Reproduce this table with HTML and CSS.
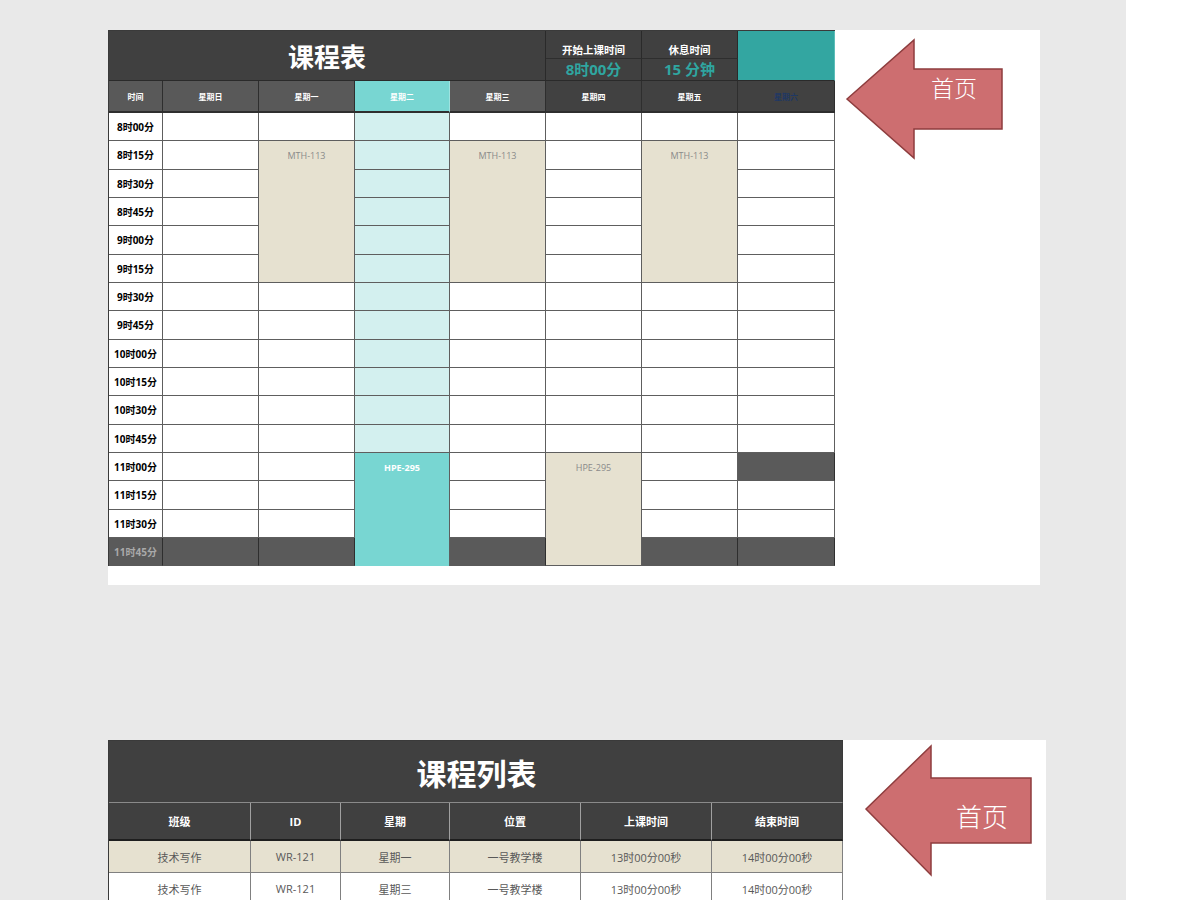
FILE: index.html
```html
<!DOCTYPE html>
<html lang="zh-CN">
<head>
<meta charset="utf-8">
<title>课程表</title>
<link rel="stylesheet" href="styles.css">
</head>
<body>
<div class="canvas">
  <section class="sheet sheet-top">
    <div class="sched">
      <div class="c title">课程表</div>
      <div class="c lbl">开始上课时间</div>
      <div class="c lbl">休息时间</div>
      <div class="c teal-box"></div>
      <div class="c val">8时00分</div>
      <div class="c val">15 分钟</div>

      <div class="c hd">时间</div>
      <div class="c hd">星期日</div>
      <div class="c hd">星期一</div>
      <div class="c hd hd-tue">星期二</div>
      <div class="c hd">星期三</div>
      <div class="c hd hd-dark">星期四</div>
      <div class="c hd hd-dark">星期五</div>
      <div class="c hd hd-dark hd-sat">星期六</div>

      <!-- 8:00 -->
      <div class="c t">8时00分</div><div class="c"></div><div class="c"></div><div class="c lt"></div><div class="c"></div><div class="c"></div><div class="c"></div><div class="c"></div>
      <!-- 8:15 -->
      <div class="c t">8时15分</div><div class="c"></div><div class="c blk beige span5">MTH-113</div><div class="c lt"></div><div class="c blk beige span5">MTH-113</div><div class="c"></div><div class="c blk beige span5">MTH-113</div><div class="c"></div>
      <!-- 8:30 -->
      <div class="c t">8时30分</div><div class="c"></div><div class="c lt"></div><div class="c"></div><div class="c"></div>
      <!-- 8:45 -->
      <div class="c t">8时45分</div><div class="c"></div><div class="c lt"></div><div class="c"></div><div class="c"></div>
      <!-- 9:00 -->
      <div class="c t">9时00分</div><div class="c"></div><div class="c lt"></div><div class="c"></div><div class="c"></div>
      <!-- 9:15 -->
      <div class="c t">9时15分</div><div class="c"></div><div class="c lt"></div><div class="c"></div><div class="c"></div>
      <!-- 9:30 -->
      <div class="c t">9时30分</div><div class="c"></div><div class="c"></div><div class="c lt"></div><div class="c"></div><div class="c"></div><div class="c"></div><div class="c"></div>
      <!-- 9:45 -->
      <div class="c t">9时45分</div><div class="c"></div><div class="c"></div><div class="c lt"></div><div class="c"></div><div class="c"></div><div class="c"></div><div class="c"></div>
      <!-- 10:00 -->
      <div class="c t">10时00分</div><div class="c"></div><div class="c"></div><div class="c lt"></div><div class="c"></div><div class="c"></div><div class="c"></div><div class="c"></div>
      <!-- 10:15 -->
      <div class="c t">10时15分</div><div class="c"></div><div class="c"></div><div class="c lt"></div><div class="c"></div><div class="c"></div><div class="c"></div><div class="c"></div>
      <!-- 10:30 -->
      <div class="c t">10时30分</div><div class="c"></div><div class="c"></div><div class="c lt"></div><div class="c"></div><div class="c"></div><div class="c"></div><div class="c"></div>
      <!-- 10:45 -->
      <div class="c t">10时45分</div><div class="c"></div><div class="c"></div><div class="c lt"></div><div class="c"></div><div class="c"></div><div class="c"></div><div class="c"></div>
      <!-- 11:00 -->
      <div class="c t">11时00分</div><div class="c"></div><div class="c"></div><div class="c blk teal span4">HPE-295</div><div class="c"></div><div class="c blk beige span4">HPE-295</div><div class="c"></div><div class="c dark"></div>
      <!-- 11:15 -->
      <div class="c t">11时15分</div><div class="c"></div><div class="c"></div><div class="c"></div><div class="c"></div><div class="c"></div>
      <!-- 11:30 -->
      <div class="c t">11时30分</div><div class="c"></div><div class="c"></div><div class="c"></div><div class="c"></div><div class="c"></div>
      <!-- 11:45 -->
      <div class="c t dark t-dark">11时45分</div><div class="c dark"></div><div class="c dark"></div><div class="c dark"></div><div class="c dark"></div><div class="c dark"></div>
    </div>

    <svg class="arrow arrow-top" width="160" height="124" viewBox="0 0 160 124">
      <polygon points="2,61 69,2 69,31 157,31 157,91 69,91 69,120" fill="#cd6e70" stroke="#8e3d3e" stroke-width="1.5"/>
      <text x="109" y="49" class="arrow-text" font-size="23" text-anchor="middle" dominant-baseline="central">首页</text>
    </svg>
  </section>

  <section class="sheet sheet-bottom">
    <div class="list">
      <div class="lc ltitle">课程列表</div>
      <div class="lc lh">班级</div>
      <div class="lc lh">ID</div>
      <div class="lc lh">星期</div>
      <div class="lc lh">位置</div>
      <div class="lc lh">上课时间</div>
      <div class="lc lh">结束时间</div>

      <div class="lc ld beige-row">技术写作</div>
      <div class="lc ld beige-row">WR-121</div>
      <div class="lc ld beige-row">星期一</div>
      <div class="lc ld beige-row">一号教学楼</div>
      <div class="lc ld beige-row">13时00分00秒</div>
      <div class="lc ld beige-row">14时00分00秒</div>

      <div class="lc ld">技术写作</div>
      <div class="lc ld">WR-121</div>
      <div class="lc ld">星期三</div>
      <div class="lc ld">一号教学楼</div>
      <div class="lc ld">13时00分00秒</div>
      <div class="lc ld">14时00分00秒</div>
    </div>

    <svg class="arrow arrow-bottom" width="170" height="134" viewBox="0 0 170 134">
      <polygon points="2,65 67,2 67,34 167,34 167,99 67,99 67,131" fill="#cd6e70" stroke="#8e3d3e" stroke-width="1.5"/>
      <text x="118" y="71" class="arrow-text" font-size="26" text-anchor="middle" dominant-baseline="central">首页</text>
    </svg>
  </section>
</div>
</body>
</html>
```

FILE: styles.css
```css
* {
  box-sizing: border-box;
  margin: 0;
  padding: 0;
}

html,
body {
  height: 900px;
  overflow: hidden;
  background: #ffffff;
}

body {
  font-family: "Open Sans", "Noto Sans CJK SC", sans-serif;
  color: #000;
}

.canvas {
  width: 1126px;
  height: 900px;
  background: #e9e9e9;
  padding: 30px 0 0 108px;
  overflow: hidden;
}

.sheet {
  background: #ffffff;
  display: flex;
  align-items: flex-start;
}

.sheet-top {
  width: 932px;
  height: 555px;
}

.sheet-bottom {
  width: 938px;
  height: 220px;
  margin-top: 155px;
}

/* ---------- schedule grid ---------- */
.sched {
  display: grid;
  grid-template-columns: 54px 96px 96px 95px 96px 96px 96px 97px;
  grid-template-rows: 28px 22px 32px repeat(16, 28.33px);
  border-left: 1px solid #3a3a3a;
  border-top: 1px solid #3a3a3a;
  flex: none;
}

.c {
  border-right: 1px solid #5e5e5e;
  border-bottom: 1px solid #5e5e5e;
  display: flex;
  align-items: center;
  justify-content: center;
  background: #ffffff;
  white-space: nowrap;
}

.title {
  grid-column: span 5;
  grid-row: span 2;
  background: #404040;
  color: #ffffff;
  font-size: 26px;
  font-weight: 700;
  border-right-color: #2a2a2a;
  border-bottom-color: #2a2a2a;
}

.lbl {
  background: #404040;
  color: #ffffff;
  font-size: 10.5px;
  font-weight: 700;
  align-items: flex-end;
  padding-bottom: 1px;
  border-right-color: #2a2a2a;
  border-bottom-color: #2e2e2e;
}

.val {
  background: #404040;
  color: #2fa6a0;
  font-size: 15px;
  font-weight: 700;
  border-right-color: #2a2a2a;
  border-bottom-color: #2a2a2a;
  padding-bottom: 2px;
}

.teal-box {
  grid-row: span 2;
  background: #33a6a1;
  border-right-color: #5cbdb8;
  border-bottom-color: #2a2a2a;
}

.hd {
  background: #595959;
  color: #ffffff;
  font-size: 8px;
  font-weight: 700;
  border-right-color: #2e2e2e;
  border-bottom: 2px solid #2e2e2e;
}

.hd-dark {
  background: #414141;
}

.hd-tue {
  background: #78d6d2;
  border-right-color: #9fe3e0;
}

.hd-sat {
  color: #1f3864;
}

.t {
  font-size: 10px;
  font-weight: 700;
  color: #000000;
}

.lt {
  background: #d3f0ef;
}

.blk {
  align-items: flex-start;
  padding-top: 8px;
  font-size: 9px;
}

.span5 {
  grid-row: span 5;
}

.span4 {
  grid-row: span 4;
}

.beige {
  background: #e6e1d0;
  color: #8a8a8a;
}

.teal {
  background: #78d6d2;
  color: #ffffff;
  font-weight: 700;
  border-bottom: none;
}

.dark {
  background: #5a5a5a;
  border-right-color: #2e2e2e;
  border-bottom-color: #5a5a5a;
}

.t-dark {
  color: #a9a9a9;
}

/* ---------- arrows ---------- */
.arrow {
  flex: none;
  display: block;
}

.arrow-top {
  margin: 8px 0 0 10px;
}

.arrow-bottom {
  margin: 4px 0 0 21px;
}

.arrow-text {
  fill: #ffffff;
  font-family: "Noto Sans CJK SC", sans-serif;
  font-weight: 300;
}

/* ---------- course list ---------- */
.list {
  display: grid;
  grid-template-columns: 142px 90px 109px 131px 131px 131px;
  grid-template-rows: 62px 38px 32px 32px;
  border-left: 1px solid #3a3a3a;
  border-top: 1px solid #3a3a3a;
  flex: none;
}

.lc {
  display: flex;
  align-items: center;
  justify-content: center;
  white-space: nowrap;
  border-right: 1px solid #808080;
  border-bottom: 1px solid #808080;
}

.ltitle {
  grid-column: span 6;
  background: #404040;
  color: #ffffff;
  font-size: 30px;
  font-weight: 700;
  border-right-color: #3a3a3a;
  border-bottom-color: #8a8a8a;
  padding-left: 2px;
}

.lh {
  background: #404040;
  color: #ffffff;
  font-size: 11px;
  font-weight: 700;
  border-right-color: #a0a0a0;
  border-bottom: 2px solid #1e1e1e;
}

.lh:nth-child(7) {
  border-right-color: #3a3a3a;
}

.ld {
  background: #ffffff;
  color: #595959;
  font-size: 11px;
}

.beige-row {
  background: #e6e1d0;
}
```
